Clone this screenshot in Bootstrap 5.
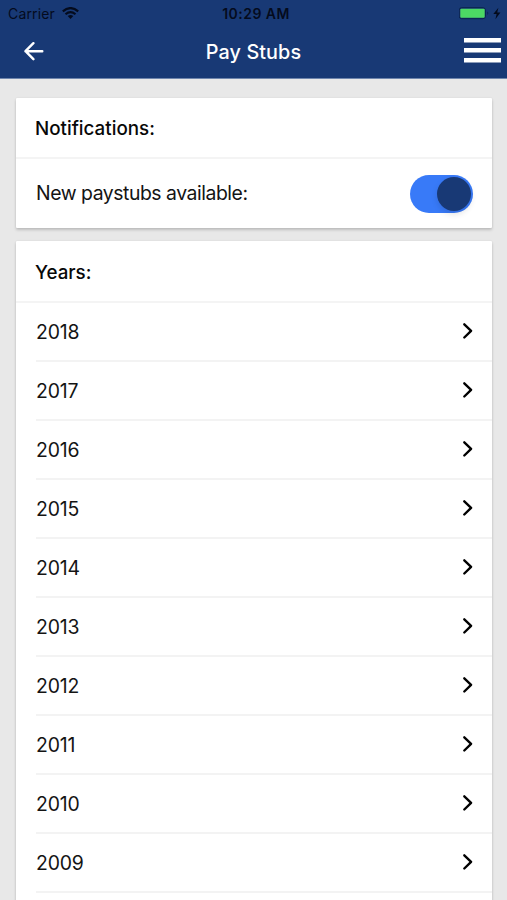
<!DOCTYPE html>
<html lang="en">
<head>
<meta charset="utf-8">
<meta name="viewport" content="width=device-width, initial-scale=1">
<title>Pay Stubs</title>
<link href="https://cdn.jsdelivr.net/npm/bootstrap@5.3.0/dist/css/bootstrap.min.css" rel="stylesheet">
<style>
html, body { height: 900px; overflow: hidden; }
body { background: #e8e8e8; color: #141414; font-family: Inter, "Liberation Sans", sans-serif; font-size: 19.4px; line-height: 1.3; }
.app-top { background: #183975; height: 79px; border-bottom: 1px solid #6f86ad; }
.status-row { height: 27px; padding: 1px 5px 0 8px; color: #040b1d; font-size: 14px; }
.status-row > div, .title-row > div { flex: 1 1 0; }
.status-row > .signal { margin-right: 2px; }
.carrier { letter-spacing: .15px; }
.wifi { margin: 0 0 2px 7px; }
.clock { font-weight: 600; letter-spacing: .45px; }
.title-row { height: 51px; padding: 0 6px 2px 24px; }
.title-row > .nav-start { margin-right: -18px; }
.title-row h1 { font-size: 19.8px; font-weight: 500; color: #fff; padding-top: 2px; letter-spacing: .1px; }
.menu-icon { margin-bottom: 2px; }
.app-body { height: 821px; padding-top: 19px; }
.panel { margin: 0 15px 0 16px; background: #fff; border-radius: 1px; box-shadow: 0 2px 3px rgba(0,0,0,.18), 0 0 2px rgba(0,0,0,.08); }
.panel-title { height: 61px; padding: 4px 0 0 19px; border-bottom: 2px solid #f4f4f4; font-size: 18.8px; font-weight: 500; color: #080808; }
.toggle-row { height: 69px; padding: 0 19px 0 20px; }
.toggle-label { letter-spacing: -.46px; }
.toggle-track { width: 63px; height: 38px; border-radius: 19px; background: #387af8; padding: 2px; }
.toggle-knob { width: 34px; height: 34px; border-radius: 50%; background: #183975; box-shadow: 0 3px 6px rgba(0,0,0,.12); }
.years { margin-top: 13px; }
.years .panel-title { height: 62px; }
.year-row { height: 59.06px; margin-left: 20px; padding-right: 18px; border-bottom: 2px solid #f3f3f3; }
.year-row span { padding-top: 2px; letter-spacing: -.15px; }
.year-row svg { margin-bottom: 2px; }
</style>
</head>
<body>
<header class="app-top">
  <div class="status-row d-flex align-items-center">
    <div class="signal d-flex align-items-center"><span class="carrier">Carrier</span>
      <svg class="wifi" width="17" height="12" viewBox="0 0 17 12" fill="none" stroke="#040b1d" stroke-width="2.1"><path d="M.8 4.4Q8.5-2.3 16.2 4.4M3.5 7.3Q8.5 3 13.5 7.3"/><path d="M8.5 12 5.7 9.1Q8.5 6.8 11.3 9.1Z" fill="#040b1d" stroke="none"/></svg>
    </div>
    <span class="clock">10:29 AM</span>
    <div class="d-flex align-items-center justify-content-end">
      <svg width="43" height="14" viewBox="0 0 43 14"><rect x=".2" y=".7" width="26.2" height="11" rx="2.5" fill="#183975" stroke="#0b234c"/><rect x="1.3" y="1.7" width="24.4" height="9" rx="1" fill="#4cd964"/><path d="M28.3 4.5q2 1.7 0 3.4z" fill="#0b234c"/><path d="M39.4.7 34.3 7h3.3l-1.2 5.2 5-6.7h-3.2z" fill="#040b1d"/></svg>
    </div>
  </div>
  <div class="title-row d-flex align-items-center">
    <div class="nav-start d-flex"><svg width="20" height="20" viewBox="0 0 20 20" fill="none" stroke="#fff" stroke-width="2.4" stroke-linecap="round" stroke-linejoin="round"><path d="M9.4 1.2 1.5 9.2l7.9 8M1.5 9.2h16.8"/></svg></div>
    <h1 class="mb-0">Pay Stubs</h1>
    <div class="d-flex justify-content-end"><svg class="menu-icon" width="38" height="26" viewBox="0 0 38 26" fill="#fff"><path d="M1 0h37v4.5H1zM1 10h37v4.5H1zM1 20h37v4.5H1z"/></svg></div>
  </div>
</header>
<main class="app-body overflow-hidden">
  <section class="panel">
    <h2 class="panel-title d-flex align-items-center mb-0"><span>Notifications:</span></h2>
    <div class="toggle-row d-flex align-items-center justify-content-between">
      <span class="toggle-label">New paystubs available:</span>
      <div class="toggle-track d-flex justify-content-end" role="switch" aria-checked="true"><div class="toggle-knob"></div></div>
    </div>
  </section>
  <section class="panel years">
    <h2 class="panel-title d-flex align-items-center mb-0"><span>Years:</span></h2>
    <div id="years"></div>
    <div class="year-row"></div>
  </section>
</main>
<script>
document.getElementById('years').innerHTML = [2018,2017,2016,2015,2014,2013,2012,2011,2010,2009].map(y =>
  `<div class="year-row d-flex align-items-center justify-content-between"><span>${y}</span><svg width="12" height="18" viewBox="0 0 12 18" fill="none" stroke="#000" stroke-width="2.4" stroke-linecap="round" stroke-linejoin="round"><path d="m2.3 2.3 6.8 6.5-6.8 6.7"/></svg></div>`).join('');
</script>
<script src="https://cdn.jsdelivr.net/npm/bootstrap@5.3.0/dist/js/bootstrap.bundle.min.js"></script>
</body>
</html>
